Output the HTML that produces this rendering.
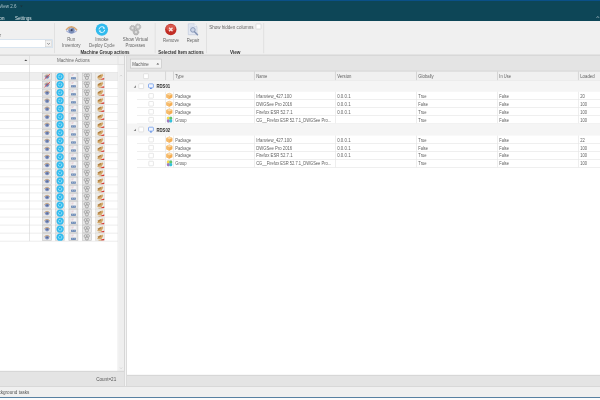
<!DOCTYPE html>
<html><head><meta charset="utf-8"><title>UI</title>
<style>
html,body{margin:0;padding:0;width:600px;height:400px;overflow:hidden;background:#fff}
#w{position:absolute;left:0;top:0;width:600px;height:400px;will-change:transform;overflow:hidden}
svg{position:absolute;left:0;top:0;display:block}
text{font-family:"Liberation Sans",sans-serif}
</style></head><body><div id="w"><svg width="600" height="400" viewBox="0 0 600 400">
<rect x="0" y="0" width="600" height="21.1" fill="#0d4657" />
<rect x="0" y="0" width="600" height="1" fill="#0a5088" />
<text x="-0.8" y="8" font-size="4.9" fill="#a9c1ca" textLength="17.2" lengthAdjust="spacingAndGlyphs">View 2.6</text>
<path d="M20.2 5.6 H22.6 L21.4 7.2Z" fill="#16313c"/>
<text x="-1" y="20" font-size="4.9" fill="#dde7ea" textLength="5.6" lengthAdjust="spacingAndGlyphs">on</text>
<text x="15" y="20" font-size="4.9" fill="#dde7ea" textLength="16.6" lengthAdjust="spacingAndGlyphs">Settings</text>
<path d="M596.6 17.8 L597.8 16.5 L599 17.8" fill="none" stroke="#c9d6db" stroke-width="0.7"/>
<rect x="0" y="21.1" width="600" height="34.2" fill="#f0f0f0" />
<rect x="0" y="54.7" width="600" height="1" fill="#c6c6c6"/>
<rect x="54.25" y="23" width="0.7" height="30.2" fill="#dadada"/>
<rect x="154.75" y="23" width="0.7" height="30.2" fill="#dadada"/>
<rect x="206.25" y="23" width="0.7" height="30.2" fill="#dadada"/>
<rect x="263.45" y="23" width="0.7" height="30.2" fill="#dadada"/>
<rect x="-1" y="39.7" width="53.3" height="8" fill="#fff" stroke="#c4d7ea" stroke-width="0.6"/>
<rect x="45.6" y="40.6" width="5.9" height="6.2" fill="#f2f2f2" stroke="#c9c9c9" stroke-width="0.5"/>
<path d="M47.2 43 L48.55 44.5 L49.9 43" fill="none" stroke="#666" stroke-width="0.6"/>
<text x="-0.5" y="37" font-size="4.9" fill="#6a6a6a">r</text>
<text x="71.2" y="41" font-size="4.9" fill="#646464" text-anchor="middle" textLength="7.8" lengthAdjust="spacingAndGlyphs">Run</text>
<text x="71.2" y="47" font-size="4.9" fill="#646464" text-anchor="middle" textLength="18.6" lengthAdjust="spacingAndGlyphs">Inventory</text>
<text x="101.9" y="41" font-size="4.9" fill="#646464" text-anchor="middle" textLength="13.4" lengthAdjust="spacingAndGlyphs">Invoke</text>
<text x="101.9" y="47" font-size="4.9" fill="#646464" text-anchor="middle" textLength="25.6" lengthAdjust="spacingAndGlyphs">Deploy Cycle</text>
<text x="135.4" y="41" font-size="4.9" fill="#646464" text-anchor="middle" textLength="25.2" lengthAdjust="spacingAndGlyphs">Show Virtual</text>
<text x="135.4" y="47" font-size="4.9" fill="#646464" text-anchor="middle" textLength="19.6" lengthAdjust="spacingAndGlyphs">Processes</text>
<text x="171" y="42" font-size="4.9" fill="#646464" text-anchor="middle" textLength="15.8" lengthAdjust="spacingAndGlyphs">Remove</text>
<text x="193" y="42" font-size="4.9" fill="#646464" text-anchor="middle" textLength="12.4" lengthAdjust="spacingAndGlyphs">Repair</text>
<text x="105" y="54" font-size="4.9" fill="#333" text-anchor="middle" font-weight="bold" textLength="49.2" lengthAdjust="spacingAndGlyphs">Machine Group actions</text>
<text x="181" y="54" font-size="4.9" fill="#333" text-anchor="middle" font-weight="bold" textLength="45.4" lengthAdjust="spacingAndGlyphs">Selected Item actions</text>
<text x="235.2" y="54" font-size="4.9" fill="#333" text-anchor="middle" font-weight="bold" textLength="10.6" lengthAdjust="spacingAndGlyphs">View</text>
<text x="209.2" y="29" font-size="4.9" fill="#666" textLength="44.3" lengthAdjust="spacingAndGlyphs">Show hidden columns</text>
<rect x="256" y="24" width="5" height="5" rx="0.5" fill="#fff" stroke="#cfcfcf" stroke-width="0.6"/>
<g transform="translate(71.5,30)">
<ellipse cx="0" cy="0.3" rx="5.5" ry="3.5" fill="#e3e6f3"/>
<path d="M-5.3 0.9 Q0 5.2 5.3 0.9" fill="none" stroke="#96a4cf" stroke-width="0.9"/>
<circle cx="0" cy="0.3" r="3.15" fill="#7b8eb8"/>
<circle cx="-0.9" cy="-0.9" r="1.2" fill="#b4c4e4" opacity="0.85"/>
<circle cx="0.1" cy="0.1" r="1.15" fill="#374163"/>
<path d="M-5.5 0 Q0 -6.6 5.6 0.2" fill="none" stroke="#d8a670" stroke-width="1.35"/></g>
<g transform="translate(95.5,23.2)">
<circle cx="6.4" cy="6.4" r="6.15" fill="#31bbee"/>
<path d="M3.5 6.2 A3 3 0 0 1 8.9 4.7 M9.3 6.6 A3 3 0 0 1 3.9 8.1" fill="none" stroke="#e6f7fe" stroke-width="0.95"/>
<path d="M8.0 3.4 L9.7 5.4 L7.4 5.6Z M4.8 9.4 L3.1 7.4 L5.4 7.2Z" fill="#e6f7fe"/></g>
<g>
<circle cx="132.5" cy="28.1" r="2.7" fill="#bdbdbd" stroke="#a6a6a6" stroke-width="0.8" stroke-dasharray="1.1 0.7"/>
<circle cx="137.9" cy="26.8" r="2.9" fill="#c3c3c3" stroke="#ababab" stroke-width="0.8" stroke-dasharray="1.1 0.7"/>
<circle cx="136" cy="32.2" r="2.8" fill="#b9b9b9" stroke="#a3a3a3" stroke-width="0.8" stroke-dasharray="1.1 0.7"/>
<circle cx="132.5" cy="28.1" r="1.1" fill="#e2e2e2"/><circle cx="137.9" cy="26.8" r="1.2" fill="#e6e6e6"/><circle cx="136" cy="32.2" r="1.1" fill="#dedede"/></g>
<g transform="translate(170.8,29.5)">
<circle cx="0" cy="0" r="5.7" fill="#c12d25"/><ellipse cx="0" cy="-1.8" rx="4.6" ry="3.3" fill="#e8776a" opacity="0.6"/>
<path d="M-1.7 -1.7 L1.7 1.7 M1.7 -1.7 L-1.7 1.7" stroke="#f6e6e4" stroke-width="1.35"/></g>
<g transform="translate(187.3,23.3)">
<path d="M1 0.5 H6.8 L9.7 3.3 V11.4 H1Z" fill="#e3e8f3" stroke="#bcc6d9" stroke-width="0.6"/>
<path d="M6.8 0.5 V3.3 H9.7" fill="#f3f5fa" stroke="#bcc6d9" stroke-width="0.5"/>
<circle cx="5.6" cy="6.6" r="2.3" fill="#cbd4e6" stroke="#8b9bba" stroke-width="1"/>
<path d="M7.2 8.4 L10.2 11.5" stroke="#8494b4" stroke-width="1.5" stroke-linecap="round"/>
<path d="M2.4 2.8 H5.6 M2.4 4.1 H4.4" stroke="#c3cce0" stroke-width="0.5"/></g>
<rect x="0" y="55.8" width="124.5" height="8.6" fill="#f0f0f0" />
<rect x="0" y="64.05" width="124.5" height="0.7" fill="#d0d0d0"/>
<text x="73.4" y="62" font-size="4.9" fill="#666" text-anchor="middle" textLength="32.6" lengthAdjust="spacingAndGlyphs">Machine Actions</text>
<path d="M24.3 61.1 L25.8 59.5 L27.3 61.1Z" fill="#4a4a4a"/>
<rect x="0" y="64.7" width="118" height="306.3" fill="#fff" />
<rect x="0" y="72.5" width="118" height="8" fill="#eeeeee" />
<rect x="0" y="72.2" width="118" height="0.6" fill="#e2e2e2"/>
<rect x="0" y="80.23" width="118" height="0.6" fill="#e2e2e2"/>
<rect x="0" y="88.26" width="118" height="0.6" fill="#e2e2e2"/>
<rect x="0" y="96.29" width="118" height="0.6" fill="#e2e2e2"/>
<rect x="0" y="104.32" width="118" height="0.6" fill="#e2e2e2"/>
<rect x="0" y="112.35" width="118" height="0.6" fill="#e2e2e2"/>
<rect x="0" y="120.38" width="118" height="0.6" fill="#e2e2e2"/>
<rect x="0" y="128.41" width="118" height="0.6" fill="#e2e2e2"/>
<rect x="0" y="136.44" width="118" height="0.6" fill="#e2e2e2"/>
<rect x="0" y="144.47" width="118" height="0.6" fill="#e2e2e2"/>
<rect x="0" y="152.5" width="118" height="0.6" fill="#e2e2e2"/>
<rect x="0" y="160.53" width="118" height="0.6" fill="#e2e2e2"/>
<rect x="0" y="168.56" width="118" height="0.6" fill="#e2e2e2"/>
<rect x="0" y="176.59" width="118" height="0.6" fill="#e2e2e2"/>
<rect x="0" y="184.62" width="118" height="0.6" fill="#e2e2e2"/>
<rect x="0" y="192.65" width="118" height="0.6" fill="#e2e2e2"/>
<rect x="0" y="200.68" width="118" height="0.6" fill="#e2e2e2"/>
<rect x="0" y="208.71" width="118" height="0.6" fill="#e2e2e2"/>
<rect x="0" y="216.74" width="118" height="0.6" fill="#e2e2e2"/>
<rect x="0" y="224.77" width="118" height="0.6" fill="#e2e2e2"/>
<rect x="0" y="232.8" width="118" height="0.6" fill="#e2e2e2"/>
<rect x="0" y="240.83" width="118" height="0.6" fill="#e2e2e2"/>
<rect x="29.2" y="55.8" width="0.6" height="185.3" fill="#d6d6d6"/>
<rect x="117.7" y="55.8" width="0.6" height="315.2" fill="#dcdcdc"/>
<rect x="118.3" y="64.7" width="6" height="306.3" fill="#efefef" />
<path d="M120.1 76.2 L121.1 75.2 L122.1 76.2" fill="none" stroke="#b4b4b4" stroke-width="0.45"/>
<path d="M120.1 367.6 L121.1 368.6 L122.1 367.6" fill="none" stroke="#b4b4b4" stroke-width="0.45"/>
<rect x="124.2" y="55.8" width="0.8" height="330.7" fill="#cdcdcd"/>
<defs>
<g id="bt"><rect x="0.3" y="0.3" width="9" height="6.9" fill="#e8e8e8" stroke="#c4c4c4" stroke-width="0.6"/></g>
<g id="i1"><use href="#bt"/><ellipse cx="4.8" cy="3.9" rx="3" ry="2.2" fill="#dfe2ee"/><circle cx="4.8" cy="4" r="2.05" fill="#7d90bd"/><circle cx="4.8" cy="4" r="0.75" fill="#4f5c88"/><path d="M1.9 3.6 Q4.8 0.4 7.7 3.7" fill="none" stroke="#d2a470" stroke-width="0.8"/></g>
<g id="i1x"><use href="#i1"/><path d="M2.2 6.3 L7.6 1.3" stroke="#d9464c" stroke-width="0.9"/></g>
<g id="i2"><rect x="0.3" y="0.3" width="9" height="6.9" fill="#ececec" stroke="#d0d0d0" stroke-width="0.6"/><circle cx="4.8" cy="3.75" r="3.65" fill="#31bbee"/><circle cx="4.8" cy="3.75" r="1.7" fill="none" stroke="#d4f1fc" stroke-width="0.6" stroke-dasharray="2.2 0.5"/></g>
<g id="i3"><use href="#bt"/><rect x="2.3" y="0.8" width="5" height="3" fill="#f2f2f6"/><path d="M2.8 1.7 H5.2 M2.8 2.7 H4.6" stroke="#d3a1aa" stroke-width="0.4"/><rect x="2.5" y="4.4" width="4.7" height="2.1" fill="#6282b1"/><rect x="3.3" y="4.9" width="1" height="0.9" fill="#a9bcd8"/><rect x="5.1" y="4.9" width="1" height="0.9" fill="#a9bcd8"/></g>
<g id="i4"><use href="#bt"/><circle cx="3.6" cy="2.7" r="1.5" fill="#dedede" stroke="#939393" stroke-width="0.65"/><circle cx="6.1" cy="2.5" r="1.4" fill="#e0e0e0" stroke="#989898" stroke-width="0.65"/><circle cx="4.9" cy="5.1" r="1.6" fill="#dcdcdc" stroke="#909090" stroke-width="0.65"/></g>
<g id="i5"><rect x="0.25" y="0.25" width="9.1" height="7" fill="#eeece8" stroke="#d9d7d3" stroke-width="0.5"/><path d="M1.8 4.8 L7 1 L8 2.4 L6.2 5.6 L2.6 5.9Z" fill="#d5aa6c"/><path d="M2.2 3.4 L5.4 1.7 L6 3 L3.2 4.7Z" fill="#b17f40"/><path d="M5.7 6.2 L8.9 5.3 L8.9 6.8 L6 7Z" fill="#d8382f"/><path d="M3 6.6 L6 6.2 L6 7 L3.4 7.1Z" fill="#c79a5c"/></g>
</defs>
<use href="#i1x" x="42.3" y="72.8"/>
<use href="#i2" x="55.3" y="72.8"/>
<use href="#i3" x="68.6" y="72.8"/>
<use href="#i4" x="82" y="72.8"/>
<use href="#i5" x="95.3" y="72.8"/>
<use href="#i1x" x="42.3" y="80.83"/>
<use href="#i2" x="55.3" y="80.83"/>
<use href="#i3" x="68.6" y="80.83"/>
<use href="#i4" x="82" y="80.83"/>
<use href="#i5" x="95.3" y="80.83"/>
<use href="#i1" x="42.3" y="88.86"/>
<use href="#i2" x="55.3" y="88.86"/>
<use href="#i3" x="68.6" y="88.86"/>
<use href="#i4" x="82" y="88.86"/>
<use href="#i5" x="95.3" y="88.86"/>
<use href="#i1" x="42.3" y="96.89"/>
<use href="#i2" x="55.3" y="96.89"/>
<use href="#i3" x="68.6" y="96.89"/>
<use href="#i4" x="82" y="96.89"/>
<use href="#i5" x="95.3" y="96.89"/>
<use href="#i1" x="42.3" y="104.92"/>
<use href="#i2" x="55.3" y="104.92"/>
<use href="#i3" x="68.6" y="104.92"/>
<use href="#i4" x="82" y="104.92"/>
<use href="#i5" x="95.3" y="104.92"/>
<use href="#i1" x="42.3" y="112.95"/>
<use href="#i2" x="55.3" y="112.95"/>
<use href="#i3" x="68.6" y="112.95"/>
<use href="#i4" x="82" y="112.95"/>
<use href="#i5" x="95.3" y="112.95"/>
<use href="#i1" x="42.3" y="120.98"/>
<use href="#i2" x="55.3" y="120.98"/>
<use href="#i3" x="68.6" y="120.98"/>
<use href="#i4" x="82" y="120.98"/>
<use href="#i5" x="95.3" y="120.98"/>
<use href="#i1" x="42.3" y="129.01"/>
<use href="#i2" x="55.3" y="129.01"/>
<use href="#i3" x="68.6" y="129.01"/>
<use href="#i4" x="82" y="129.01"/>
<use href="#i5" x="95.3" y="129.01"/>
<use href="#i1" x="42.3" y="137.04"/>
<use href="#i2" x="55.3" y="137.04"/>
<use href="#i3" x="68.6" y="137.04"/>
<use href="#i4" x="82" y="137.04"/>
<use href="#i5" x="95.3" y="137.04"/>
<use href="#i1" x="42.3" y="145.07"/>
<use href="#i2" x="55.3" y="145.07"/>
<use href="#i3" x="68.6" y="145.07"/>
<use href="#i4" x="82" y="145.07"/>
<use href="#i5" x="95.3" y="145.07"/>
<use href="#i1" x="42.3" y="153.1"/>
<use href="#i2" x="55.3" y="153.1"/>
<use href="#i3" x="68.6" y="153.1"/>
<use href="#i4" x="82" y="153.1"/>
<use href="#i5" x="95.3" y="153.1"/>
<use href="#i1" x="42.3" y="161.13"/>
<use href="#i2" x="55.3" y="161.13"/>
<use href="#i3" x="68.6" y="161.13"/>
<use href="#i4" x="82" y="161.13"/>
<use href="#i5" x="95.3" y="161.13"/>
<use href="#i1" x="42.3" y="169.16"/>
<use href="#i2" x="55.3" y="169.16"/>
<use href="#i3" x="68.6" y="169.16"/>
<use href="#i4" x="82" y="169.16"/>
<use href="#i5" x="95.3" y="169.16"/>
<use href="#i1" x="42.3" y="177.19"/>
<use href="#i2" x="55.3" y="177.19"/>
<use href="#i3" x="68.6" y="177.19"/>
<use href="#i4" x="82" y="177.19"/>
<use href="#i5" x="95.3" y="177.19"/>
<use href="#i1" x="42.3" y="185.22"/>
<use href="#i2" x="55.3" y="185.22"/>
<use href="#i3" x="68.6" y="185.22"/>
<use href="#i4" x="82" y="185.22"/>
<use href="#i5" x="95.3" y="185.22"/>
<use href="#i1" x="42.3" y="193.25"/>
<use href="#i2" x="55.3" y="193.25"/>
<use href="#i3" x="68.6" y="193.25"/>
<use href="#i4" x="82" y="193.25"/>
<use href="#i5" x="95.3" y="193.25"/>
<use href="#i1" x="42.3" y="201.28"/>
<use href="#i2" x="55.3" y="201.28"/>
<use href="#i3" x="68.6" y="201.28"/>
<use href="#i4" x="82" y="201.28"/>
<use href="#i5" x="95.3" y="201.28"/>
<use href="#i1" x="42.3" y="209.31"/>
<use href="#i2" x="55.3" y="209.31"/>
<use href="#i3" x="68.6" y="209.31"/>
<use href="#i4" x="82" y="209.31"/>
<use href="#i5" x="95.3" y="209.31"/>
<use href="#i1" x="42.3" y="217.34"/>
<use href="#i2" x="55.3" y="217.34"/>
<use href="#i3" x="68.6" y="217.34"/>
<use href="#i4" x="82" y="217.34"/>
<use href="#i5" x="95.3" y="217.34"/>
<use href="#i1" x="42.3" y="225.37"/>
<use href="#i2" x="55.3" y="225.37"/>
<use href="#i3" x="68.6" y="225.37"/>
<use href="#i4" x="82" y="225.37"/>
<use href="#i5" x="95.3" y="225.37"/>
<use href="#i1" x="42.3" y="233.4"/>
<use href="#i2" x="55.3" y="233.4"/>
<use href="#i3" x="68.6" y="233.4"/>
<use href="#i4" x="82" y="233.4"/>
<use href="#i5" x="95.3" y="233.4"/>
<rect x="0" y="371" width="124.2" height="15.5" fill="#e4e4e4" />
<rect x="0" y="370.85" width="124.2" height="0.7" fill="#cdcdcd"/>
<text x="96.2" y="381" font-size="4.9" fill="#555" textLength="20" lengthAdjust="spacingAndGlyphs">Count=21</text>
<rect x="125" y="55.8" width="1.4" height="330.7" fill="#f4f4f4" />
<rect x="126.3" y="55.8" width="0.8" height="330.7" fill="#cdcdcd"/>
<rect x="127" y="55.8" width="473" height="15.3" fill="#e4e4e4" />
<rect x="130.4" y="59.1" width="31" height="9" fill="#f4f4f4" stroke="#c4c4c4" stroke-width="0.6"/>
<text x="132.2" y="65.5" font-size="4.9" fill="#555" textLength="16.6" lengthAdjust="spacingAndGlyphs">Machine</text>
<path d="M156.4 64.6 L157.8 63 L159.2 64.6Z" fill="#555"/>
<rect x="127" y="71.1" width="473" height="9.4" fill="#f0f0f0" />
<rect x="127" y="70.75" width="473" height="0.7" fill="#cbcbcb"/>
<rect x="127" y="80.2" width="473" height="0.6" fill="#d4d4d4"/>
<rect x="165.35" y="71.5" width="0.7" height="8.8" fill="#cbcbcb"/>
<rect x="173.15" y="71.5" width="0.7" height="8.8" fill="#cbcbcb"/>
<rect x="253.95" y="71.5" width="0.7" height="8.8" fill="#cbcbcb"/>
<rect x="334.95" y="71.5" width="0.7" height="8.8" fill="#cbcbcb"/>
<rect x="416.05" y="71.5" width="0.7" height="8.8" fill="#cbcbcb"/>
<rect x="497.05" y="71.5" width="0.7" height="8.8" fill="#cbcbcb"/>
<rect x="577.95" y="71.5" width="0.7" height="8.8" fill="#cbcbcb"/>
<text x="175.2" y="78" font-size="4.9" fill="#5e5e5e" textLength="8.6" lengthAdjust="spacingAndGlyphs">Type</text>
<text x="256.2" y="78" font-size="4.9" fill="#5e5e5e" textLength="11" lengthAdjust="spacingAndGlyphs">Name</text>
<text x="337.2" y="78" font-size="4.9" fill="#5e5e5e" textLength="14.2" lengthAdjust="spacingAndGlyphs">Version</text>
<text x="418.3" y="78" font-size="4.9" fill="#5e5e5e" textLength="15.4" lengthAdjust="spacingAndGlyphs">Globally</text>
<text x="499.3" y="78" font-size="4.9" fill="#5e5e5e" textLength="11.6" lengthAdjust="spacingAndGlyphs">In Use</text>
<text x="580.2" y="78" font-size="4.9" fill="#5e5e5e" textLength="14.4" lengthAdjust="spacingAndGlyphs">Loaded</text>
<rect x="143.6" y="73.8" width="4.8" height="4.8" rx="0.5" fill="#fff" stroke="#d2d2d2" stroke-width="0.6"/>
<rect x="127" y="80.8" width="473" height="294.2" fill="#fff" />
<rect x="127" y="80.7" width="473" height="11.05" fill="#f5f5f5" />
<path d="M136.0 85.325 V87.625 H133.7Z" fill="#858585"/>
<rect x="138.8" y="83.775" width="4.8" height="4.8" rx="0.5" fill="#fff" stroke="#d2d2d2" stroke-width="0.6"/>
<g transform="translate(148.1,83.475)"><rect x="0.4" y="0.4" width="4.9" height="3.9" rx="0.8" fill="#f0f5fe" stroke="#6a97ea" stroke-width="0.75"/><path d="M1.9 5.6 H3.8 L3.4 4.4 H2.3Z" fill="#4a80e2"/></g>
<text x="156.4" y="88" font-size="4.9" fill="#2e2e2e" font-weight="bold" textLength="13.8" lengthAdjust="spacingAndGlyphs">RDS01</text>
<rect x="137" y="99.35" width="463" height="0.6" fill="#e4e4e4"/>
<rect x="148.8" y="93.55" width="4.6" height="4.6" rx="0.5" fill="#fff" stroke="#d6d6d6" stroke-width="0.6"/>
<g transform="translate(166.3,92.6)"><path d="M3.1 0.1 L6.1 1.6 V4.8 L3.1 6.3 L0.1 4.8 V1.6Z" fill="#f4ad52"/><path d="M3.1 0.1 L6.1 1.6 L3.1 3.1 L0.1 1.6Z" fill="#fad7a3"/><path d="M3.1 3.1 V6.3 L0.1 4.8 V1.6Z" fill="#f6bb6c"/></g>
<text x="175.2" y="98" font-size="4.9" fill="#5e5e5e" textLength="15.8" lengthAdjust="spacingAndGlyphs">Package</text>
<text x="256.2" y="98" font-size="4.9" fill="#5e5e5e" textLength="35.4" lengthAdjust="spacingAndGlyphs">Irfanview_427.100</text>
<text x="337.2" y="98" font-size="4.9" fill="#5e5e5e" textLength="13.4" lengthAdjust="spacingAndGlyphs">0.0.0.1</text>
<text x="418.3" y="98" font-size="4.9" fill="#5e5e5e" textLength="8.2" lengthAdjust="spacingAndGlyphs">True</text>
<text x="499.3" y="98" font-size="4.9" fill="#5e5e5e" textLength="9.6" lengthAdjust="spacingAndGlyphs">False</text>
<text x="580.2" y="98" font-size="4.9" fill="#5e5e5e" textLength="4.6" lengthAdjust="spacingAndGlyphs">20</text>
<rect x="165.4" y="91.75" width="0.6" height="7.9" fill="#e3e3e3"/>
<rect x="173.2" y="91.75" width="0.6" height="7.9" fill="#e3e3e3"/>
<rect x="254" y="91.75" width="0.6" height="7.9" fill="#e3e3e3"/>
<rect x="335" y="91.75" width="0.6" height="7.9" fill="#e3e3e3"/>
<rect x="416.1" y="91.75" width="0.6" height="7.9" fill="#e3e3e3"/>
<rect x="497.1" y="91.75" width="0.6" height="7.9" fill="#e3e3e3"/>
<rect x="578" y="91.75" width="0.6" height="7.9" fill="#e3e3e3"/>
<rect x="137" y="107.3" width="463" height="0.6" fill="#e4e4e4"/>
<rect x="148.8" y="101.475" width="4.6" height="4.6" rx="0.5" fill="#fff" stroke="#d6d6d6" stroke-width="0.6"/>
<g transform="translate(166.3,100.525)"><path d="M3.1 0.1 L6.1 1.6 V4.8 L3.1 6.3 L0.1 4.8 V1.6Z" fill="#f4ad52"/><path d="M3.1 0.1 L6.1 1.6 L3.1 3.1 L0.1 1.6Z" fill="#fad7a3"/><path d="M3.1 3.1 V6.3 L0.1 4.8 V1.6Z" fill="#f6bb6c"/></g>
<text x="175.2" y="106" font-size="4.9" fill="#5e5e5e" textLength="15.8" lengthAdjust="spacingAndGlyphs">Package</text>
<text x="256.2" y="106" font-size="4.9" fill="#5e5e5e" textLength="36" lengthAdjust="spacingAndGlyphs">DWGSee Pro 2016</text>
<text x="337.2" y="106" font-size="4.9" fill="#5e5e5e" textLength="13.4" lengthAdjust="spacingAndGlyphs">0.0.0.1</text>
<text x="418.3" y="106" font-size="4.9" fill="#5e5e5e" textLength="9.6" lengthAdjust="spacingAndGlyphs">False</text>
<text x="499.3" y="106" font-size="4.9" fill="#5e5e5e" textLength="9.6" lengthAdjust="spacingAndGlyphs">False</text>
<text x="580.2" y="106" font-size="4.9" fill="#5e5e5e" textLength="6.8" lengthAdjust="spacingAndGlyphs">100</text>
<rect x="165.4" y="99.65" width="0.6" height="7.95" fill="#e3e3e3"/>
<rect x="173.2" y="99.65" width="0.6" height="7.95" fill="#e3e3e3"/>
<rect x="254" y="99.65" width="0.6" height="7.95" fill="#e3e3e3"/>
<rect x="335" y="99.65" width="0.6" height="7.95" fill="#e3e3e3"/>
<rect x="416.1" y="99.65" width="0.6" height="7.95" fill="#e3e3e3"/>
<rect x="497.1" y="99.65" width="0.6" height="7.95" fill="#e3e3e3"/>
<rect x="578" y="99.65" width="0.6" height="7.95" fill="#e3e3e3"/>
<rect x="137" y="115.25" width="463" height="0.6" fill="#e4e4e4"/>
<rect x="148.8" y="109.425" width="4.6" height="4.6" rx="0.5" fill="#fff" stroke="#d6d6d6" stroke-width="0.6"/>
<g transform="translate(166.3,108.475)"><path d="M3.1 0.1 L6.1 1.6 V4.8 L3.1 6.3 L0.1 4.8 V1.6Z" fill="#f4ad52"/><path d="M3.1 0.1 L6.1 1.6 L3.1 3.1 L0.1 1.6Z" fill="#fad7a3"/><path d="M3.1 3.1 V6.3 L0.1 4.8 V1.6Z" fill="#f6bb6c"/></g>
<text x="175.2" y="114" font-size="4.9" fill="#5e5e5e" textLength="15.8" lengthAdjust="spacingAndGlyphs">Package</text>
<text x="256.2" y="114" font-size="4.9" fill="#5e5e5e" textLength="36.4" lengthAdjust="spacingAndGlyphs">Firefox ESR 52.7.1</text>
<text x="337.2" y="114" font-size="4.9" fill="#5e5e5e" textLength="13.4" lengthAdjust="spacingAndGlyphs">0.0.0.1</text>
<text x="418.3" y="114" font-size="4.9" fill="#5e5e5e" textLength="8.2" lengthAdjust="spacingAndGlyphs">True</text>
<text x="499.3" y="114" font-size="4.9" fill="#5e5e5e" textLength="9.6" lengthAdjust="spacingAndGlyphs">False</text>
<text x="580.2" y="114" font-size="4.9" fill="#5e5e5e" textLength="6.8" lengthAdjust="spacingAndGlyphs">100</text>
<rect x="165.4" y="107.6" width="0.6" height="7.95" fill="#e3e3e3"/>
<rect x="173.2" y="107.6" width="0.6" height="7.95" fill="#e3e3e3"/>
<rect x="254" y="107.6" width="0.6" height="7.95" fill="#e3e3e3"/>
<rect x="335" y="107.6" width="0.6" height="7.95" fill="#e3e3e3"/>
<rect x="416.1" y="107.6" width="0.6" height="7.95" fill="#e3e3e3"/>
<rect x="497.1" y="107.6" width="0.6" height="7.95" fill="#e3e3e3"/>
<rect x="578" y="107.6" width="0.6" height="7.95" fill="#e3e3e3"/>
<rect x="137" y="123.2" width="463" height="0.6" fill="#e4e4e4"/>
<rect x="148.8" y="117.375" width="4.6" height="4.6" rx="0.5" fill="#fff" stroke="#d6d6d6" stroke-width="0.6"/>
<g transform="translate(166.5,116.475)"><rect x="0.3" y="0.3" width="5.4" height="5.6" rx="1.2" fill="#b4d6e6"/><rect x="0.4" y="0.3" width="2.8" height="2.9" rx="1.1" fill="#f5d84c"/><rect x="2.9" y="0.3" width="2.8" height="2.9" rx="1.1" fill="#60c56f"/><rect x="0.4" y="3.0" width="2.8" height="2.9" rx="1.1" fill="#a276bd"/><rect x="2.9" y="3.0" width="2.8" height="2.9" rx="1.1" fill="#34c1d9"/></g>
<text x="175.2" y="122" font-size="4.9" fill="#5e5e5e" textLength="11.4" lengthAdjust="spacingAndGlyphs">Group</text>
<text x="256.2" y="122" font-size="4.9" fill="#5e5e5e" textLength="75" lengthAdjust="spacingAndGlyphs">CG__Firefox ESR 52.7.1_DWGSee Pro...</text>
<text x="418.3" y="122" font-size="4.9" fill="#5e5e5e" textLength="8.2" lengthAdjust="spacingAndGlyphs">True</text>
<text x="499.3" y="122" font-size="4.9" fill="#5e5e5e" textLength="9.6" lengthAdjust="spacingAndGlyphs">False</text>
<text x="580.2" y="122" font-size="4.9" fill="#5e5e5e" textLength="6.8" lengthAdjust="spacingAndGlyphs">100</text>
<rect x="165.4" y="115.55" width="0.6" height="7.95" fill="#e3e3e3"/>
<rect x="173.2" y="115.55" width="0.6" height="7.95" fill="#e3e3e3"/>
<rect x="254" y="115.55" width="0.6" height="7.95" fill="#e3e3e3"/>
<rect x="335" y="115.55" width="0.6" height="7.95" fill="#e3e3e3"/>
<rect x="416.1" y="115.55" width="0.6" height="7.95" fill="#e3e3e3"/>
<rect x="497.1" y="115.55" width="0.6" height="7.95" fill="#e3e3e3"/>
<rect x="578" y="115.55" width="0.6" height="7.95" fill="#e3e3e3"/>
<rect x="127" y="123.5" width="473" height="12.1" fill="#f5f5f5" />
<path d="M136.0 128.65 V130.95 H133.7Z" fill="#858585"/>
<rect x="138.8" y="127.1" width="4.8" height="4.8" rx="0.5" fill="#fff" stroke="#d2d2d2" stroke-width="0.6"/>
<g transform="translate(148.1,126.8)"><rect x="0.4" y="0.4" width="4.9" height="3.9" rx="0.8" fill="#f0f5fe" stroke="#6a97ea" stroke-width="0.75"/><path d="M1.9 5.6 H3.8 L3.4 4.4 H2.3Z" fill="#4a80e2"/></g>
<text x="156.4" y="132" font-size="4.9" fill="#2e2e2e" font-weight="bold" textLength="13.8" lengthAdjust="spacingAndGlyphs">RDS02</text>
<rect x="137" y="143.15" width="463" height="0.6" fill="#e4e4e4"/>
<rect x="148.8" y="137.375" width="4.6" height="4.6" rx="0.5" fill="#fff" stroke="#d6d6d6" stroke-width="0.6"/>
<g transform="translate(166.3,136.425)"><path d="M3.1 0.1 L6.1 1.6 V4.8 L3.1 6.3 L0.1 4.8 V1.6Z" fill="#f4ad52"/><path d="M3.1 0.1 L6.1 1.6 L3.1 3.1 L0.1 1.6Z" fill="#fad7a3"/><path d="M3.1 3.1 V6.3 L0.1 4.8 V1.6Z" fill="#f6bb6c"/></g>
<text x="175.2" y="142" font-size="4.9" fill="#5e5e5e" textLength="15.8" lengthAdjust="spacingAndGlyphs">Package</text>
<text x="256.2" y="142" font-size="4.9" fill="#5e5e5e" textLength="35.4" lengthAdjust="spacingAndGlyphs">Irfanview_427.100</text>
<text x="337.2" y="142" font-size="4.9" fill="#5e5e5e" textLength="13.4" lengthAdjust="spacingAndGlyphs">0.0.0.1</text>
<text x="418.3" y="142" font-size="4.9" fill="#5e5e5e" textLength="8.2" lengthAdjust="spacingAndGlyphs">True</text>
<text x="499.3" y="142" font-size="4.9" fill="#5e5e5e" textLength="9.6" lengthAdjust="spacingAndGlyphs">False</text>
<text x="580.2" y="142" font-size="4.9" fill="#5e5e5e" textLength="4.6" lengthAdjust="spacingAndGlyphs">22</text>
<rect x="165.4" y="135.6" width="0.6" height="7.85" fill="#e3e3e3"/>
<rect x="173.2" y="135.6" width="0.6" height="7.85" fill="#e3e3e3"/>
<rect x="254" y="135.6" width="0.6" height="7.85" fill="#e3e3e3"/>
<rect x="335" y="135.6" width="0.6" height="7.85" fill="#e3e3e3"/>
<rect x="416.1" y="135.6" width="0.6" height="7.85" fill="#e3e3e3"/>
<rect x="497.1" y="135.6" width="0.6" height="7.85" fill="#e3e3e3"/>
<rect x="578" y="135.6" width="0.6" height="7.85" fill="#e3e3e3"/>
<rect x="137" y="151.15" width="463" height="0.6" fill="#e4e4e4"/>
<rect x="148.8" y="145.3" width="4.6" height="4.6" rx="0.5" fill="#fff" stroke="#d6d6d6" stroke-width="0.6"/>
<g transform="translate(166.3,144.35)"><path d="M3.1 0.1 L6.1 1.6 V4.8 L3.1 6.3 L0.1 4.8 V1.6Z" fill="#f4ad52"/><path d="M3.1 0.1 L6.1 1.6 L3.1 3.1 L0.1 1.6Z" fill="#fad7a3"/><path d="M3.1 3.1 V6.3 L0.1 4.8 V1.6Z" fill="#f6bb6c"/></g>
<text x="175.2" y="150" font-size="4.9" fill="#5e5e5e" textLength="15.8" lengthAdjust="spacingAndGlyphs">Package</text>
<text x="256.2" y="150" font-size="4.9" fill="#5e5e5e" textLength="36" lengthAdjust="spacingAndGlyphs">DWGSee Pro 2016</text>
<text x="337.2" y="150" font-size="4.9" fill="#5e5e5e" textLength="13.4" lengthAdjust="spacingAndGlyphs">0.0.0.1</text>
<text x="418.3" y="150" font-size="4.9" fill="#5e5e5e" textLength="9.6" lengthAdjust="spacingAndGlyphs">False</text>
<text x="499.3" y="150" font-size="4.9" fill="#5e5e5e" textLength="9.6" lengthAdjust="spacingAndGlyphs">False</text>
<text x="580.2" y="150" font-size="4.9" fill="#5e5e5e" textLength="6.8" lengthAdjust="spacingAndGlyphs">100</text>
<rect x="165.4" y="143.45" width="0.6" height="8" fill="#e3e3e3"/>
<rect x="173.2" y="143.45" width="0.6" height="8" fill="#e3e3e3"/>
<rect x="254" y="143.45" width="0.6" height="8" fill="#e3e3e3"/>
<rect x="335" y="143.45" width="0.6" height="8" fill="#e3e3e3"/>
<rect x="416.1" y="143.45" width="0.6" height="8" fill="#e3e3e3"/>
<rect x="497.1" y="143.45" width="0.6" height="8" fill="#e3e3e3"/>
<rect x="578" y="143.45" width="0.6" height="8" fill="#e3e3e3"/>
<rect x="137" y="159.1" width="463" height="0.6" fill="#e4e4e4"/>
<rect x="148.8" y="153.275" width="4.6" height="4.6" rx="0.5" fill="#fff" stroke="#d6d6d6" stroke-width="0.6"/>
<g transform="translate(166.3,152.325)"><path d="M3.1 0.1 L6.1 1.6 V4.8 L3.1 6.3 L0.1 4.8 V1.6Z" fill="#f4ad52"/><path d="M3.1 0.1 L6.1 1.6 L3.1 3.1 L0.1 1.6Z" fill="#fad7a3"/><path d="M3.1 3.1 V6.3 L0.1 4.8 V1.6Z" fill="#f6bb6c"/></g>
<text x="175.2" y="157" font-size="4.9" fill="#5e5e5e" textLength="15.8" lengthAdjust="spacingAndGlyphs">Package</text>
<text x="256.2" y="157" font-size="4.9" fill="#5e5e5e" textLength="36.4" lengthAdjust="spacingAndGlyphs">Firefox ESR 52.7.1</text>
<text x="337.2" y="157" font-size="4.9" fill="#5e5e5e" textLength="13.4" lengthAdjust="spacingAndGlyphs">0.0.0.1</text>
<text x="418.3" y="157" font-size="4.9" fill="#5e5e5e" textLength="8.2" lengthAdjust="spacingAndGlyphs">True</text>
<text x="499.3" y="157" font-size="4.9" fill="#5e5e5e" textLength="9.6" lengthAdjust="spacingAndGlyphs">False</text>
<text x="580.2" y="157" font-size="4.9" fill="#5e5e5e" textLength="6.8" lengthAdjust="spacingAndGlyphs">100</text>
<rect x="165.4" y="151.45" width="0.6" height="7.95" fill="#e3e3e3"/>
<rect x="173.2" y="151.45" width="0.6" height="7.95" fill="#e3e3e3"/>
<rect x="254" y="151.45" width="0.6" height="7.95" fill="#e3e3e3"/>
<rect x="335" y="151.45" width="0.6" height="7.95" fill="#e3e3e3"/>
<rect x="416.1" y="151.45" width="0.6" height="7.95" fill="#e3e3e3"/>
<rect x="497.1" y="151.45" width="0.6" height="7.95" fill="#e3e3e3"/>
<rect x="578" y="151.45" width="0.6" height="7.95" fill="#e3e3e3"/>
<rect x="137" y="167" width="463" height="0.6" fill="#e4e4e4"/>
<rect x="148.8" y="161.2" width="4.6" height="4.6" rx="0.5" fill="#fff" stroke="#d6d6d6" stroke-width="0.6"/>
<g transform="translate(166.5,160.3)"><rect x="0.3" y="0.3" width="5.4" height="5.6" rx="1.2" fill="#b4d6e6"/><rect x="0.4" y="0.3" width="2.8" height="2.9" rx="1.1" fill="#f5d84c"/><rect x="2.9" y="0.3" width="2.8" height="2.9" rx="1.1" fill="#60c56f"/><rect x="0.4" y="3.0" width="2.8" height="2.9" rx="1.1" fill="#a276bd"/><rect x="2.9" y="3.0" width="2.8" height="2.9" rx="1.1" fill="#34c1d9"/></g>
<text x="175.2" y="165" font-size="4.9" fill="#5e5e5e" textLength="11.4" lengthAdjust="spacingAndGlyphs">Group</text>
<text x="256.2" y="165" font-size="4.9" fill="#5e5e5e" textLength="75" lengthAdjust="spacingAndGlyphs">CG__Firefox ESR 52.7.1_DWGSee Pro...</text>
<text x="418.3" y="165" font-size="4.9" fill="#5e5e5e" textLength="8.2" lengthAdjust="spacingAndGlyphs">True</text>
<text x="499.3" y="165" font-size="4.9" fill="#5e5e5e" textLength="9.6" lengthAdjust="spacingAndGlyphs">False</text>
<text x="580.2" y="165" font-size="4.9" fill="#5e5e5e" textLength="6.8" lengthAdjust="spacingAndGlyphs">100</text>
<rect x="165.4" y="159.4" width="0.6" height="7.9" fill="#e3e3e3"/>
<rect x="173.2" y="159.4" width="0.6" height="7.9" fill="#e3e3e3"/>
<rect x="254" y="159.4" width="0.6" height="7.9" fill="#e3e3e3"/>
<rect x="335" y="159.4" width="0.6" height="7.9" fill="#e3e3e3"/>
<rect x="416.1" y="159.4" width="0.6" height="7.9" fill="#e3e3e3"/>
<rect x="497.1" y="159.4" width="0.6" height="7.9" fill="#e3e3e3"/>
<rect x="578" y="159.4" width="0.6" height="7.9" fill="#e3e3e3"/>
<rect x="127" y="375" width="473" height="11.5" fill="#e4e4e4" />
<rect x="127" y="374.85" width="473" height="0.7" fill="#cdcdcd"/>
<rect x="0" y="386.5" width="600" height="11" fill="#f0f0f0" />
<rect x="0" y="386.25" width="600" height="0.7" fill="#cfcfcf"/>
<text x="-1.6" y="393.6" font-size="4.9" fill="#555" textLength="31" lengthAdjust="spacingAndGlyphs">ckground tasks</text>
<rect x="0" y="397.15" width="600" height="0.9" fill="#3f6e95"/>
<rect x="0" y="398.1" width="600" height="1.9" fill="#fdfdfd" />
</svg></div></body></html>
